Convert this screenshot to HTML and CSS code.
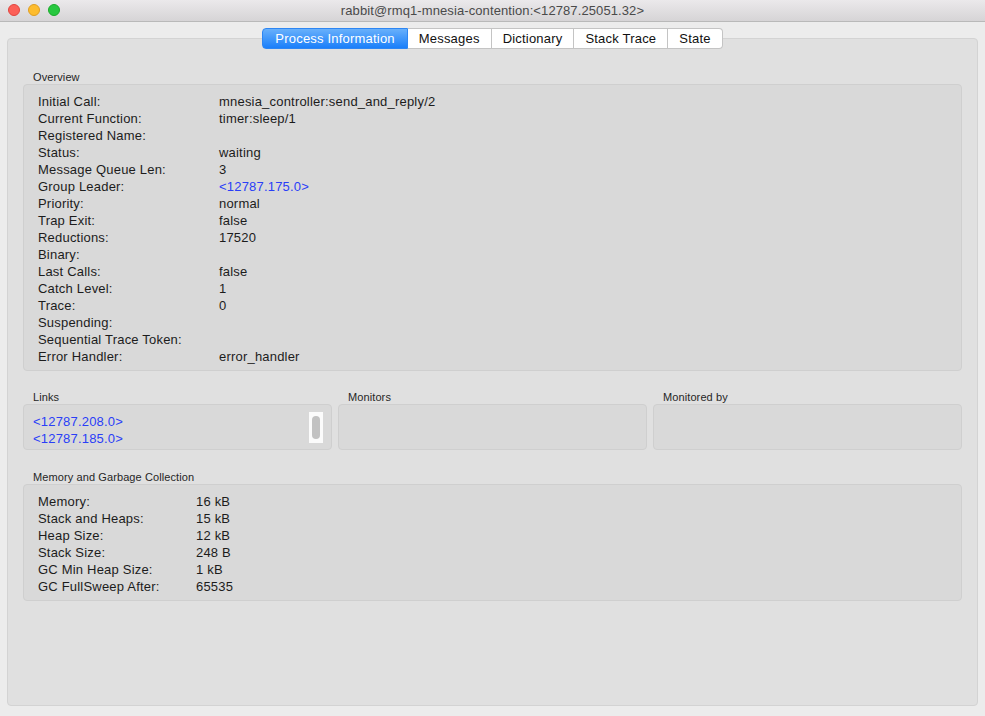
FILE: index.html
```html
<!DOCTYPE html>
<html lang="en">
<head>
    <meta charset="UTF-8">
    <title>rabbit@rmq1-mnesia-contention:&lt;12787.25051.32&gt;</title>
    <link rel="stylesheet" href="styles.css">
</head>
<body>

<div class="titlebar">
    <div class="lights">
        <span class="light red"></span>
        <span class="light yellow"></span>
        <span class="light green"></span>
    </div>
    <div class="title">rabbit@rmq1-mnesia-contention:&lt;12787.25051.32&gt;</div>
</div>

<div class="panel">
    <div class="tabs">
        <div class="tab active">Process Information</div>
        <div class="tab">Messages</div>
        <div class="tab">Dictionary</div>
        <div class="tab">Stack Trace</div>
        <div class="tab">State</div>
    </div>

    <div class="group">
        <div class="group-title">Overview</div>
        <div class="box">
            <table class="info overview">
                <tr><td>Initial Call:</td><td>mnesia_controller:send_and_reply/2</td></tr>
                <tr><td>Current Function:</td><td>timer:sleep/1</td></tr>
                <tr><td>Registered Name:</td><td></td></tr>
                <tr><td>Status:</td><td>waiting</td></tr>
                <tr><td>Message Queue Len:</td><td>3</td></tr>
                <tr><td>Group Leader:</td><td class="link">&lt;12787.175.0&gt;</td></tr>
                <tr><td>Priority:</td><td>normal</td></tr>
                <tr><td>Trap Exit:</td><td>false</td></tr>
                <tr><td>Reductions:</td><td>17520</td></tr>
                <tr><td>Binary:</td><td></td></tr>
                <tr><td>Last Calls:</td><td>false</td></tr>
                <tr><td>Catch Level:</td><td>1</td></tr>
                <tr><td>Trace:</td><td>0</td></tr>
                <tr><td>Suspending:</td><td></td></tr>
                <tr><td>Sequential Trace Token:</td><td></td></tr>
                <tr><td>Error Handler:</td><td>error_handler</td></tr>
            </table>
        </div>
    </div>

    <div class="row">
        <div class="group">
            <div class="group-title">Links</div>
            <div class="box list">
                <div class="link">&lt;12787.208.0&gt;</div>
                <div class="link">&lt;12787.185.0&gt;</div>
                <div class="scroller"><div class="thumb"></div></div>
            </div>
        </div>
        <div class="group">
            <div class="group-title">Monitors</div>
            <div class="box list"></div>
        </div>
        <div class="group">
            <div class="group-title">Monitored by</div>
            <div class="box list"></div>
        </div>
    </div>

    <div class="group">
        <div class="group-title">Memory and Garbage Collection</div>
        <div class="box">
            <table class="info memory">
                <tr><td>Memory:</td><td>16 kB</td></tr>
                <tr><td>Stack and Heaps:</td><td>15 kB</td></tr>
                <tr><td>Heap Size:</td><td>12 kB</td></tr>
                <tr><td>Stack Size:</td><td>248 B</td></tr>
                <tr><td>GC Min Heap Size:</td><td>1 kB</td></tr>
                <tr><td>GC FullSweep After:</td><td>65535</td></tr>
            </table>
        </div>
    </div>
</div>

</body>
</html>
```

FILE: styles.css
```css
html, body {
    margin: 0;
    padding: 0;
}
body {
    width: 985px;
    height: 716px;
    overflow: hidden;
    background: #ececec;
    font-family: "Liberation Sans", Arial, sans-serif;
    font-size: 13px;
    letter-spacing: 0.2px;
    color: #1c1c1c;
}
.titlebar {
    position: relative;
    height: 21px;
    border-bottom: 1px solid #b9b9b9;
    background: linear-gradient(#ebe9eb, #d6d4d6);
    display: flex;
    align-items: center;
    justify-content: center;
}
.title {
    font-size: 13px;
    color: #4a4a4a;
    letter-spacing: 0.1px;
}
.lights {
    position: absolute;
    left: 8px;
    top: 4px;
    display: flex;
    gap: 8px;
}
.light {
    width: 12px;
    height: 12px;
    border-radius: 50%;
    box-sizing: border-box;
}
.red {
    background: #fc5f57;
    border: 1px solid #e1453f;
}
.yellow {
    background: #fdbc2e;
    border: 1px solid #df9e22;
}
.green {
    background: #28c840;
    border: 1px solid #1aab2a;
}
.panel {
    margin: 16px 7px 0 7px;
    height: 666px;
    border: 1px solid #d3d3d3;
    border-radius: 4px;
    background: #e0e0e0;
    padding: 0 15px;
}
.tabs {
    display: flex;
    justify-content: center;
    margin-top: -11px;
    margin-bottom: 22px;
}
.tab {
    height: 19px;
    line-height: 19px;
    padding: 0 11px;
    background: #fff;
    border: 1px solid #c4c4c4;
    border-left: none;
    color: #111;
}
.tab:first-child {
    border-left: 1px solid #c4c4c4;
    border-radius: 4px 0 0 4px;
}
.tab:last-child {
    border-radius: 0 4px 4px 0;
}
.tab.active {
    background: linear-gradient(#68b0fb, #1a7ffa);
    border-color: #2d86f3;
    color: #fff;
    padding: 0 12px;
}
.group-title {
    font-size: 11px;
    line-height: 13px;
    padding-left: 10px;
    letter-spacing: 0.1px;
    color: #262626;
}
.box {
    background: #d9d9d9;
    border: 1px solid #cfcfcf;
    border-radius: 4px;
}
.info {
    border-collapse: collapse;
    margin: 8px 0 5px 14px;
}
.info td {
    padding: 0;
    height: 17px;
    line-height: 17px;
    white-space: nowrap;
}
.overview td:first-child {
    width: 181px;
}
.memory td:first-child {
    width: 158px;
}
.link {
    color: #2a3ef7;
}
.row {
    display: flex;
    gap: 6px;
    margin-top: 20px;
    margin-bottom: 21px;
}
.row .group {
    flex: 1 1 0;
}
.list {
    position: relative;
    padding: 8px 0 0 9px;
    box-sizing: border-box;
    height: 46px;
    line-height: 17px;
}
.scroller {
    position: absolute;
    right: 8px;
    top: 7px;
    width: 14px;
    height: 31px;
    background: #fbfbfb;
}
.thumb {
    margin: 4px 3px;
    width: 8px;
    height: 23px;
    border-radius: 4px;
    background: #c2c2c2;
}
```
